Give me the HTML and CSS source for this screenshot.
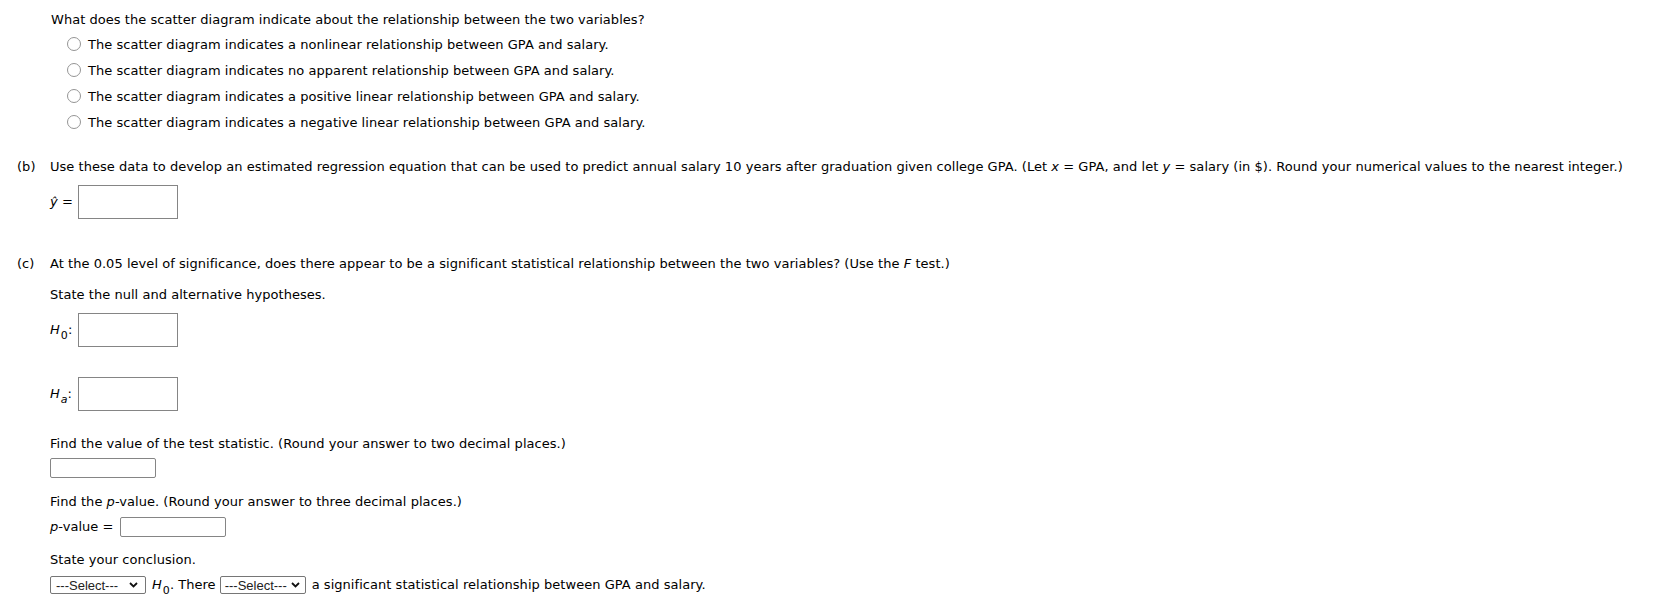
FILE: index.html
```html
<!DOCTYPE html>
<html>
<head>
<meta charset="utf-8">
<link rel="stylesheet" href="styles.css">
</head>
<body>
<div class="page">
  <div class="question">
    <p class="line">What does the scatter diagram indicate about the relationship between the two variables?</p>
    <ul class="options">
      <li class="option"><span class="radio"></span><span>The scatter diagram indicates a nonlinear relationship between GPA and salary.</span></li>
      <li class="option"><span class="radio"></span><span>The scatter diagram indicates no apparent relationship between GPA and salary.</span></li>
      <li class="option"><span class="radio"></span><span>The scatter diagram indicates a positive linear relationship between GPA and salary.</span></li>
      <li class="option"><span class="radio"></span><span>The scatter diagram indicates a negative linear relationship between GPA and salary.</span></li>
    </ul>
  </div>

  <div class="part part-b">
    <span class="part-label">(b)</span>
    <div class="part-body">
      <p class="line">Use these data to develop an estimated regression equation that can be used to predict annual salary 10 years after graduation given college GPA. (Let <i>x</i> = GPA, and let <i>y</i> = salary (in $). Round your numerical values to the nearest integer.)</p>
      <div class="eq-row eq-yhat">
        <span class="eq-label"><i>ŷ</i> =</span>
        <span class="box box-big"></span>
      </div>
    </div>
  </div>

  <div class="part part-c">
    <span class="part-label">(c)</span>
    <div class="part-body">
      <p class="line">At the 0.05 level of significance, does there appear to be a significant statistical relationship between the two variables? (Use the <i>F</i> test.)</p>
      <p class="line state-null">State the null and alternative hypotheses.</p>
      <div class="eq-row eq-h0">
        <span class="eq-label"><i>H</i><sub>0</sub>:</span>
        <span class="box box-big"></span>
      </div>
      <div class="eq-row eq-ha">
        <span class="eq-label"><i>H</i><sub><i>a</i></sub>:</span>
        <span class="box box-big"></span>
      </div>
      <p class="line find-value">Find the value of the test statistic. (Round your answer to two decimal places.)</p>
      <div class="eq-row eq-stat">
        <span class="box box-stat"></span>
      </div>
      <p class="line find-p">Find the <i>p</i>-value. (Round your answer to three decimal places.)</p>
      <div class="eq-row eq-p">
        <span class="p-label"><i>p</i>-value =</span>
        <span class="box box-p"></span>
      </div>
      <p class="line state-concl">State your conclusion.</p>
      <div class="eq-row eq-concl">
        <span class="select select-1">---Select---<svg class="chev" viewBox="0 0 9 6" width="9" height="6"><path d="M1 1 L4.5 4.5 L8 1" fill="none" stroke="#111" stroke-width="1.8"/></svg></span>
        <span class="concl-text concl-h"><i>H</i><sub>0</sub>. There</span>
        <span class="select select-2">---Select---<svg class="chev" viewBox="0 0 9 6" width="9" height="6"><path d="M1 1 L4.5 4.5 L8 1" fill="none" stroke="#111" stroke-width="1.8"/></svg></span>
        <span class="concl-text concl-tail">a significant statistical relationship between GPA and salary.</span>
      </div>
    </div>
  </div>
</div>
</body>
</html>
```
FILE: styles.css
```css
html, body {
  margin: 0;
  padding: 0;
  background: #ffffff;
}
body {
  font-family: "DejaVu Sans", Verdana, sans-serif;
  font-size: 13px;
  color: #000000;
  letter-spacing: 0.04px;
}
.page {
  padding-top: 12px;
}
.line {
  margin: 0;
  line-height: 16px;
  white-space: nowrap;
}
i {
  font-style: italic;
}
sub {
  font-size: 11px;
  line-height: 0;
  vertical-align: -5px;
  margin-left: 1px;
}
.question {
  padding-left: 51px;
}
.options {
  list-style: none;
  margin: 3px 0 0 0;
  padding: 0 0 0 16px;
}
.option {
  height: 26px;
  display: flex;
  align-items: center;
  white-space: nowrap;
}
.radio {
  flex: none;
  width: 12px;
  height: 12px;
  border: 1px solid #959595;
  border-radius: 50%;
  margin-right: 7px;
  box-sizing: content-box;
}
.part {
  display: flex;
  padding-left: 17px;
}
.part-label {
  flex: none;
  width: 33px;
  line-height: 16px;
}
.part-body {
  flex: 1;
}
.part-b {
  margin-top: 24px;
}
.part-c {
  margin-top: 37px;
}
.eq-row {
  display: flex;
  align-items: center;
  white-space: nowrap;
}
.eq-label {
  flex: none;
  width: 28px;
  line-height: 16px;
}
.box {
  display: block;
  flex: none;
  box-sizing: border-box;
  border: 1px solid #858585;
  background: #ffffff;
}
.box-big {
  width: 100px;
  height: 34px;
}
.eq-yhat {
  margin-top: 10px;
}
.state-null {
  margin-top: 15px;
}
.eq-h0 {
  margin-top: 10px;
}
.eq-ha {
  margin-top: 30px;
}
.find-value {
  margin-top: 25px;
}
.eq-stat {
  margin-top: 6px;
}
.box-stat {
  width: 106px;
  height: 20px;
  border-radius: 2px;
}
.find-p {
  margin-top: 16px;
}
.eq-p {
  margin-top: 7px;
}
.p-label {
  margin-right: 6px;
  line-height: 16px;
}
.box-p {
  width: 106px;
  height: 20px;
  border-radius: 2px;
}
.state-concl {
  margin-top: 15px;
}
.eq-concl {
  margin-top: 8px;
}
.select {
  flex: none;
  box-sizing: border-box;
  height: 18px;
  border: 1px solid #767676;
  border-radius: 2px;
  display: flex;
  align-items: center;
  justify-content: space-between;
  font-family: "Liberation Sans", Arial, sans-serif;
  font-size: 13px;
  letter-spacing: 0;
  color: #222;
  padding: 0 7px 0 5px;
  background: #fff;
}
.select-1 {
  width: 96px;
}
.select-2 {
  width: 86px;
  padding-left: 4px;
  padding-right: 5px;
}
.chev {
  display: block;
}
.concl-text {
  line-height: 16px;
}
.concl-h {
  margin: 0 4px 0 6px;
}
.concl-tail {
  margin-left: 6px;
}
```
